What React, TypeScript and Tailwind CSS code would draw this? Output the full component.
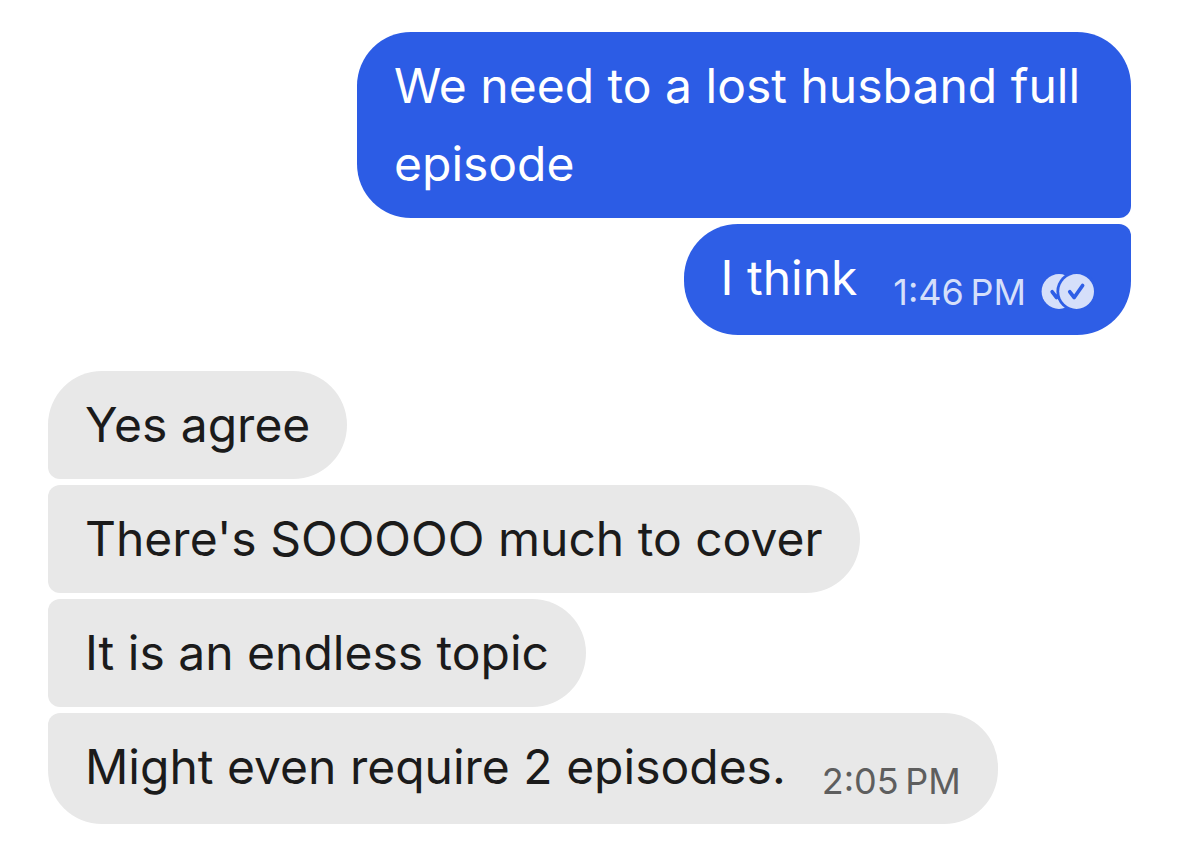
import type { ReactNode } from "react";

type BubbleProps = {
  className: string;
  children: ReactNode;
};

type StampProps = {
  className: string;
  time: string;
  children?: ReactNode;
};

const ReadReceipt = () => (
  <svg
    viewBox="0 0 53 36"
    className="h-9 w-[53px]"
    role="img"
    aria-label="Read"
  >
    <circle cx="18" cy="17.5" r="17.4" fill="#d5dffa" />
    <path
      d="M11.2 17.8l4.4 5.7 8.8-12"
      fill="none"
      stroke="#2e5ee6"
      strokeWidth="3.7"
      strokeLinecap="round"
      strokeLinejoin="round"
    />
    <circle cx="35.6" cy="17.5" r="20.2" fill="#2e5ee6" />
    <circle cx="35.6" cy="17.5" r="17.4" fill="#d5dffa" />
    <path
      d="M28.8 17.8l4.4 5.7 8.4-12"
      fill="none"
      stroke="#2e5ee6"
      strokeWidth="3.7"
      strokeLinecap="round"
      strokeLinejoin="round"
    />
  </svg>
);

const Stamp = ({ className, time, children }: StampProps) => (
  <div
    className={`mb-[7px] ml-9 flex shrink-0 items-center gap-[15px] text-4xl/9 ${className}`}
  >
    <time>{time}</time>
    {children}
  </div>
);

const Bubble = ({ className, children }: BubbleProps) => (
  <div className={`flex items-end px-[37px] pt-[15px] ${className}`}>
    {children}
  </div>
);

const App = () => {
  return (
    <main className="flex min-h-screen flex-col bg-white px-12 pt-8 pb-5 font-['Inter',sans-serif] text-5xl/[78px] text-[#1b1b1b]">
      <section className="flex flex-col items-end gap-1.5 text-white">
        <Bubble className="max-w-[774px] rounded-[54px] rounded-br-xl bg-[#2c5ce5] pb-[15px]">
          <p>We need to a lost husband full episode</p>
        </Bubble>
        <Bubble className="rounded-[54px] rounded-tr-xl bg-[#2e5ee6] pb-[18px]">
          <p>I think</p>
          <Stamp className="text-[#d5dffa]" time={"1:46\u202fPM"}>
            <ReadReceipt />
          </Stamp>
        </Bubble>
      </section>
      <section className="mt-9 flex flex-col items-start gap-1.5">
        <Bubble className="rounded-[54px] rounded-bl-xl bg-[#e8e8e8] pb-[15px]">
          <p>Yes agree</p>
        </Bubble>
        <Bubble className="rounded-[54px] rounded-l-xl bg-[#e8e8e8] pb-[15px]">
          <p>There's SOOOOO much to cover</p>
        </Bubble>
        <Bubble className="rounded-[54px] rounded-l-xl bg-[#e8e8e8] pb-[15px]">
          <p>It is an endless topic</p>
        </Bubble>
        <Bubble className="rounded-[54px] rounded-tl-xl bg-[#e8e8e8] pb-[18px]">
          <p>Might even require 2 episodes.</p>
          <Stamp className="text-[#5e5e5e]" time={"2:05\u202fPM"} />
        </Bubble>
      </section>
    </main>
  );
};

export default App;
